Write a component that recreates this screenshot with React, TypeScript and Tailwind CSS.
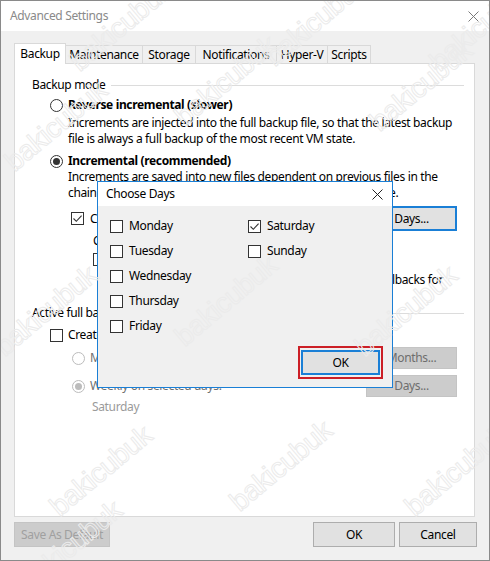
import React from "react";

function Radio({ checked = false, disabled = false }: { checked?: boolean; disabled?: boolean }) {
  return (
    <span
      className={
        disabled
          ? "w-[13px] h-[13px] shrink-0 rounded-full border border-[#bcbcbc] bg-white flex items-center justify-center"
          : "w-[13px] h-[13px] shrink-0 rounded-full border border-[#333333] bg-white flex items-center justify-center"
      }
    >
      {checked && (
        <span
          className={
            disabled
              ? "w-[7px] h-[7px] rounded-full bg-[#bcbcbc]"
              : "w-[7px] h-[7px] rounded-full bg-[#333333]"
          }
        />
      )}
    </span>
  );
}

function Check({ checked = false }: { checked?: boolean }) {
  return (
    <span className="w-[13px] h-[13px] shrink-0 border border-[#333333] bg-white flex items-center justify-center">
      {checked && (
        <svg width="11" height="11" viewBox="0 0 11 11">
          <path d="M1.5 5.5 L4.3 8.3 L9.6 2.6" stroke="#333333" strokeWidth="1.1" fill="none" />
        </svg>
      )}
    </span>
  );
}

function Group({ label }: { label: string }) {
  return (
    <div className="flex items-center h-4">
      <span>{label}</span>
      <span className="flex-1 ml-[6px] h-px bg-[#dcdcdc]" />
    </div>
  );
}

function Watermarks() {
  const spots = [
    [55, 125],
    [225, 80],
    [420, 85],
    [120, 25],
    [315, 20],
    [480, 25],
    [45, 310],
    [225, 300],
    [405, 310],
    [100, 470],
    [280, 465],
    [455, 470],
    [70, 545],
  ];
  return (
    <div className="absolute inset-0 overflow-hidden pointer-events-none">
      {spots.map(([x, y], i) => (
        <span
          key={i}
          className="absolute -translate-x-1/2 -translate-y-1/2 -rotate-[40deg] text-[28px] text-transparent [-webkit-text-stroke:1px_#ebebeb] font-['Liberation_Sans',sans-serif] whitespace-nowrap"
          style={{ left: x, top: y }}
        >
          bakicubuk
        </span>
      ))}
    </div>
  );
}

export default function App() {
  const tabs = [
    { n: "Maintenance", w: "w-[77px]" },
    { n: "Storage", w: "w-[53px]" },
    { n: "Notifications", w: "w-[81px]" },
    { n: "Hyper-V", w: "w-[51px]" },
    { n: "Scripts", w: "w-[43px]" },
  ];
  return (
    <div className="relative w-[490px] h-[561px] bg-[#f0f0f0] border border-[#8a8a8a] font-['Noto_Sans',sans-serif] text-[12px] leading-4 text-black tracking-[-0.35px] overflow-hidden">
      {/* title bar */}
      <div className="h-[30px] bg-white flex items-center justify-between pl-[9px] pr-[10px]">
        <span className="text-[#8a8a8a] text-[12px]">Advanced Settings</span>
        <svg width="11" height="11" viewBox="0 0 11 11">
          <path d="M0.5 0.5 L10.5 10.5 M10.5 0.5 L0.5 10.5" stroke="#7a7a7a" strokeWidth="1" />
        </svg>
      </div>

      {/* body */}
      <div className="pt-[12px] pl-[13px]">
        <div className="flex items-end h-[20px]">
          <div className="w-[52px] h-[21px] -mb-px relative z-10 bg-white border-l border-t border-r border-[#d9d9d9] flex items-center justify-center">
            Backup
          </div>
          {tabs.map((t) => (
            <div
              key={t.n}
              className={`${t.w} h-[18px] border-t border-r border-[#d9d9d9] flex items-center justify-center`}
            >
              {t.n}
            </div>
          ))}
        </div>

        <div className="w-[461px] h-[454px] bg-white border border-[#d9d9d9] pl-[17px] pr-[10px] flex flex-col">
          <div className="mt-[13px]">
            <Group label="Backup mode" />
          </div>
          <div className="mt-[4px] ml-[18px] flex items-center h-4 gap-[5px]">
            <Radio />
            <span className="font-bold">Reverse incremental (slower)</span>
          </div>
          <div className="mt-[2px] ml-[36px] whitespace-nowrap">
            <div>Increments are injected into the full backup file, so that the latest backup</div>
            <div>file is always a full backup of the most recent VM state.</div>
          </div>
          <div className="mt-[6px] ml-[18px] flex items-center h-4 gap-[5px]">
            <Radio checked />
            <span className="font-bold">Incremental (recommended)</span>
          </div>
          <div className="ml-[36px] whitespace-nowrap">
            <div>Increments are saved into new files dependent on previous files in the</div>
            <div>chain. Periodic full backups are required for best performance.</div>
          </div>
          <div className="mt-[5px] ml-[39px] mr-[7px] flex items-center h-[25px]">
            <Check checked />
            <span className="ml-[6px] flex-1">Create synthetic full backups periodically on</span>
            <div className="w-[91px] h-[25px] border-2 border-[#1a7fd6] bg-[#e1e1e1] flex items-center justify-center">
              Days...
            </div>
          </div>
          <div className="mt-[2px] ml-[61px] h-4">Create on: Saturday</div>
          <div className="mt-[2px] ml-[61px] flex items-center h-4 gap-[6px]">
            <Check />
            <span>Transform previous backup chains into rollbacks</span>
          </div>
          <div className="mt-[5px] mr-[21px] h-4 text-right whitespace-nowrap">previous chains into rollbacks for</div>

          <div className="mt-[17px]">
            <Group label="Active full backup" />
          </div>
          <div className="mt-[6px] ml-[18px] flex items-center h-4 gap-[5px]">
            <Check />
            <span>Create active full backups periodically</span>
          </div>
          <div className="mt-[4px] ml-[40px] mr-[7px] flex items-center h-[22px]">
            <Radio disabled />
            <span className="ml-[5px] flex-1 text-[#707070]">Monthly on: First Monday</span>
            <div className="w-[91px] h-[22px] border border-[#c4c4c4] bg-[#cccccc] text-[#6e6e6e] flex items-center justify-center">
              Months...
            </div>
          </div>
          <div className="mt-[6px] ml-[40px] mr-[7px] flex items-center h-[22px]">
            <Radio checked disabled />
            <span className="ml-[5px] flex-1 text-[#707070]">Weekly on selected days:</span>
            <div className="w-[91px] h-[22px] border border-[#c4c4c4] bg-[#cccccc] text-[#6e6e6e] flex items-center justify-center">
              Days...
            </div>
          </div>
          <div className="mt-[2px] ml-[60px] h-4 text-[#9a9a9a]">Saturday</div>
        </div>

        <div className="mt-[5px] w-[463px] flex items-center">
          <div className="w-[96px] h-[25px] border border-[#c4c4c4] bg-[#cccccc] text-[#a0a0a0] flex items-center justify-center">
            Save As Default
          </div>
          <div className="flex-1" />
          <div className="w-[82px] h-[25px] border border-[#adadad] bg-[#e1e1e1] flex items-center justify-center">
            OK
          </div>
          <div className="ml-[4px] w-[78px] h-[25px] border border-[#adadad] bg-[#e1e1e1] flex items-center justify-center">
            Cancel
          </div>
        </div>
      </div>

      {/* Choose Days dialog */}
      <div className="absolute left-[96px] top-[180px] w-[296px] h-[207px] border border-[#1a7fd6] bg-[#f0f0f0] flex flex-col">
        <div className="h-[24px] bg-white flex items-center justify-between pl-[8px] pr-[9px]">
          <span>Choose Days</span>
          <svg width="11" height="11" viewBox="0 0 11 11">
            <path d="M0.5 0.5 L10.5 10.5 M10.5 0.5 L0.5 10.5" stroke="#222222" strokeWidth="1" />
          </svg>
        </div>
        <div className="flex-1 flex flex-col pl-[12px]">
          <div className="pt-[12px] flex">
            <div className="w-[138px] flex flex-col gap-[9px]">
              {["Monday", "Tuesday", "Wednesday", "Thursday", "Friday"].map((d) => (
                <div key={d} className="flex items-center h-4 gap-[6px]">
                  <Check />
                  <span>{d}</span>
                </div>
              ))}
            </div>
            <div className="flex flex-col gap-[9px]">
              <div className="flex items-center h-4 gap-[6px]">
                <Check checked />
                <span>Saturday</span>
              </div>
              <div className="flex items-center h-4 gap-[6px]">
                <Check />
                <span>Sunday</span>
              </div>
            </div>
          </div>
          <div className="mt-[12px] flex justify-end pr-[9px]">
            <div className="w-[85px] h-[33px] border-2 border-[#cc1f26] px-[1px] pt-[2px]">
              <div className="w-[79px] h-[25px] border-2 border-[#1a7fd6] bg-[#e1e1e1] flex items-center justify-center">
                OK
              </div>
            </div>
          </div>
        </div>
      </div>

      <Watermarks />
    </div>
  );
}
